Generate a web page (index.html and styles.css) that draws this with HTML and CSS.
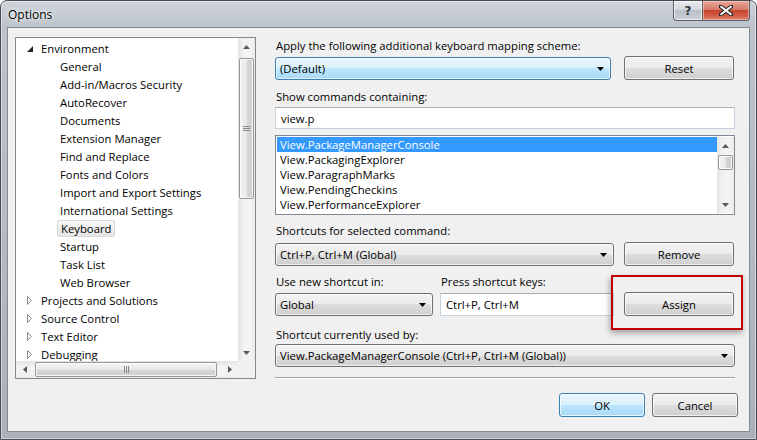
FILE: index.html
```html
<!DOCTYPE html>
<html>
<head>
<meta charset="utf-8">
<link rel="stylesheet" href="styles.css">
</head>
<body>
<div class="window">
  <div class="titlebar">
    <span class="title">Options</span>
    <div class="caption-btns">
      <div class="cbtn help">?</div>
      <div class="cbtn close">
        <svg width="14" height="11" viewBox="0 0 14 11"><path d="M1 1 L13 10 M13 1 L1 10" stroke="#2a2a2a" stroke-width="4" stroke-linecap="square"/><path d="M1.5 1.3 L12.5 9.7 M12.5 1.3 L1.5 9.7" stroke="#fff" stroke-width="2"/></svg>
      </div>
    </div>
  </div>
  <div class="client">
    <div class="main">
      <div class="tree">
        <div class="tree-items">
          <div class="trow top"><svg class="exp" width="6" height="6" viewBox="0 0 6 6"><polygon points="6,0 6,6 0,6" fill="#262626"/></svg><span>Environment</span></div>
          <div class="trow child"><span>General</span></div>
          <div class="trow child"><span>Add-in/Macros Security</span></div>
          <div class="trow child"><span>AutoRecover</span></div>
          <div class="trow child"><span>Documents</span></div>
          <div class="trow child"><span>Extension Manager</span></div>
          <div class="trow child"><span>Find and Replace</span></div>
          <div class="trow child"><span>Fonts and Colors</span></div>
          <div class="trow child"><span>Import and Export Settings</span></div>
          <div class="trow child"><span>International Settings</span></div>
          <div class="trow child"><span class="sel">Keyboard</span></div>
          <div class="trow child"><span>Startup</span></div>
          <div class="trow child"><span>Task List</span></div>
          <div class="trow child"><span>Web Browser</span></div>
          <div class="trow top"><svg class="col" width="6" height="9" viewBox="0 0 6 9"><polygon points="0.5,0.5 4.5,4.5 0.5,8.5" fill="none" stroke="#8a8a8a"/></svg><span>Projects and Solutions</span></div>
          <div class="trow top"><svg class="col" width="6" height="9" viewBox="0 0 6 9"><polygon points="0.5,0.5 4.5,4.5 0.5,8.5" fill="none" stroke="#8a8a8a"/></svg><span>Source Control</span></div>
          <div class="trow top"><svg class="col" width="6" height="9" viewBox="0 0 6 9"><polygon points="0.5,0.5 4.5,4.5 0.5,8.5" fill="none" stroke="#8a8a8a"/></svg><span>Text Editor</span></div>
          <div class="trow top"><svg class="col" width="6" height="9" viewBox="0 0 6 9"><polygon points="0.5,0.5 4.5,4.5 0.5,8.5" fill="none" stroke="#8a8a8a"/></svg><span>Debugging</span></div>
        </div>
        <div class="vscroll tree-v">
          <div class="sbtn"><svg width="7" height="4" viewBox="0 0 7 4"><polygon points="3.5,0 7,4 0,4" fill="#5a5a5a"/></svg></div>
          <div class="vtrack"><div class="vthumb tthumb"><svg width="7" height="7" viewBox="0 0 7 7"><path d="M0 1.5H7M0 3.5H7M0 5.5H7" stroke="#8a8a8a"/></svg></div></div>
          <div class="sbtn"><svg width="7" height="4" viewBox="0 0 7 4"><polygon points="0,0 7,0 3.5,4" fill="#5a5a5a"/></svg></div>
        </div>
        <div class="hscroll">
          <div class="sbtn"><svg width="4" height="7" viewBox="0 0 4 7"><polygon points="0,3.5 4,0 4,7" fill="#5a5a5a"/></svg></div>
          <div class="htrack"><div class="hthumb"><svg width="7" height="7" viewBox="0 0 7 7"><path d="M1.5 0V7M3.5 0V7M5.5 0V7" stroke="#8a8a8a"/></svg></div></div>
          <div class="sbtn"><svg width="4" height="7" viewBox="0 0 4 7"><polygon points="0,0 4,3.5 0,7" fill="#5a5a5a"/></svg></div>
        </div>
        <div class="corner"></div>
      </div>

      <div class="panel">
        <div class="lbl">Apply the following additional keyboard mapping scheme:</div>
        <div class="row r1">
          <div class="combo hot w336"><span>(Default)</span><svg width="7" height="4" viewBox="0 0 7 4"><polygon points="0,0 7,0 3.5,4" fill="#000"/></svg></div>
          <div class="btn">Reset</div>
        </div>
        <div class="lbl l2">Show commands containing:</div>
        <div class="textbox full t1">view.p</div>
        <div class="listbox">
          <div class="items">
            <div class="li selected">View.PackageManagerConsole</div>
            <div class="li">View.PackagingExplorer</div>
            <div class="li">View.ParagraphMarks</div>
            <div class="li">View.PendingCheckins</div>
            <div class="li">View.PerformanceExplorer</div>
          </div>
          <div class="vscroll list-v">
            <div class="sbtn"><svg width="7" height="4" viewBox="0 0 7 4"><polygon points="3.5,0 7,4 0,4" fill="#5a5a5a"/></svg></div>
            <div class="vtrack"><div class="vthumb lthumb"></div></div>
            <div class="sbtn"><svg width="7" height="4" viewBox="0 0 7 4"><polygon points="0,0 7,0 3.5,4" fill="#5a5a5a"/></svg></div>
          </div>
        </div>
        <div class="lbl l3">Shortcuts for selected command:</div>
        <div class="row r3">
          <div class="combo w339"><span>Ctrl+P, Ctrl+M (Global)</span><svg width="7" height="4" viewBox="0 0 7 4"><polygon points="0,0 7,0 3.5,4" fill="#000"/></svg></div>
          <div class="btn">Remove</div>
        </div>
        <div class="row lblrow">
          <div class="lbl w165">Use new shortcut in:</div>
          <div class="lbl">Press shortcut keys:</div>
        </div>
        <div class="row r4">
          <div class="combo w158"><span>Global</span><svg width="7" height="4" viewBox="0 0 7 4"><polygon points="0,0 7,0 3.5,4" fill="#000"/></svg></div>
          <div class="textbox w174">Ctrl+P, Ctrl+M</div>
          <div class="assign-wrap">
            <div class="btn">Assign</div>
            <div class="highlight"></div>
          </div>
        </div>
        <div class="lbl l5">Shortcut currently used by:</div>
        <div class="combo full c5"><span>View.PackageManagerConsole (Ctrl+P, Ctrl+M (Global))</span><svg width="7" height="4" viewBox="0 0 7 4"><polygon points="0,0 7,0 3.5,4" fill="#000"/></svg></div>
        <div class="sep"></div>
      </div>
    </div>
    <div class="footer">
      <div class="btn hot fbtn">OK</div>
      <div class="btn fbtn">Cancel</div>
    </div>
  </div>
</div>
</body>
</html>
```

FILE: styles.css
```css
* { box-sizing: border-box; }
html, body { margin: 0; padding: 0; }
body {
  width: 757px; height: 440px; overflow: hidden;
  font-family: "Open Sans", "Noto Sans", sans-serif;
  font-size: 11.3px; color: #000; background: #fff;
}
.window {
  width: 757px; height: 440px;
  border: 1px solid #4a4e54;
  border-radius: 7px 7px 0 0;
  background: linear-gradient(to bottom, #cfd4da 0, #bcc3cb 26px, #aab1b9 100%);
  box-shadow: inset 0 0 0 1px rgba(255,255,255,0.45);
  display: flex; flex-direction: column;
  padding: 0 6px 7px 6px;
}
.titlebar { height: 26px; display: flex; justify-content: space-between; align-items: flex-start; }
.title { margin: 6px 0 0 1px; font-size: 12px; line-height: 16px; color: #000; text-shadow: 0 0 6px #fff, 0 0 3px #fff; }
.caption-btns { display: flex; }
.cbtn {
  height: 20px; border: 1px solid #5b6068; border-top: none;
  display: flex; align-items: center; justify-content: center;
}
.help {
  width: 29px; border-right: none; border-radius: 0 0 0 4px;
  background: linear-gradient(to bottom, #e9ecef 0, #d3d8de 45%, #b8bfc7 50%, #c9d0d7 100%);
  font-family: "DejaVu Sans", sans-serif; font-size: 12px; font-weight: bold; color: #333;
  box-shadow: inset 0 0 0 1px rgba(255,255,255,0.6);
}
.close {
  width: 48px; border-radius: 0 0 4px 0;
  background: linear-gradient(to bottom, #e9a99d 0, #d77a68 45%, #c7452f 50%, #d35e48 80%, #e38b76 100%);
  box-shadow: inset 0 0 0 1px rgba(255,220,210,0.5);
}
.client {
  flex: 1; background: #f0f0f0;
  border: 1px solid #848a92;
  display: flex; flex-direction: column;
}
.main { display: flex; padding-top: 9px; height: 351px; }

/* tree */
.tree {
  margin-left: 7px; width: 241px; height: 342px;
  border: 1px solid #828790; background: #fff;
  display: grid; grid-template-columns: 222px 17px; grid-template-rows: 323px 17px;
}
.tree-items { overflow: hidden; padding-top: 1px; }
.trow { height: 18px; display: flex; align-items: center; white-space: nowrap; }
.trow span { line-height: 17px; }
.trow.top { padding-left: 11px; }
.trow.top svg { width: 6px; margin-right: 8px; }
.trow.top .exp { margin-top: 1px; }
.trow.child { padding-left: 44px; }
.sel {
  margin-left: -3px; padding: 0 3px;
  border: 1px solid #d9d9d9; border-radius: 2px;
  background: linear-gradient(to bottom, #f8f8f8, #e5e5e5);
  line-height: 15px !important;
}

/* scrollbars */
.vscroll { display: flex; flex-direction: column; background: linear-gradient(to right, #e3e3e3, #f1f1f1 30%, #f4f4f4 70%, #ececec); }
.sbtn { width: 17px; height: 17px; display: flex; align-items: center; justify-content: center; flex: none; }
.vtrack { flex: 1; display: flex; flex-direction: column; align-items: center; }
.vthumb {
  width: 15px; border: 1px solid #979797; border-radius: 2px;
  background: linear-gradient(to right, #f4f4f4, #e8e8e8 50%, #d6d6d6 51%, #cfcfcf);
  box-shadow: inset 0 0 0 1px rgba(255,255,255,0.8);
  display: flex; align-items: center; justify-content: center;
}
.tthumb { margin-top: 3px; height: 141px; }
.hscroll {
  display: flex;
  background: linear-gradient(to bottom, #e3e3e3, #f1f1f1 30%, #f4f4f4 70%, #ececec);
}
.htrack { flex: 1; display: flex; align-items: center; }
.hthumb {
  margin-left: 2px; width: 182px; height: 15px;
  border: 1px solid #979797; border-radius: 2px;
  background: linear-gradient(to bottom, #f4f4f4, #e8e8e8 50%, #d6d6d6 51%, #cfcfcf);
  box-shadow: inset 0 0 0 1px rgba(255,255,255,0.8);
  display: flex; align-items: center; justify-content: center;
}
.corner { background: #f0f0f0; }

/* right panel */
.panel { margin-left: 19px; margin-top: 1px; width: 460px; display: flex; flex-direction: column; }
.lbl { height: 16px; line-height: 16px; white-space: nowrap; padding-left: 1px; }
.row { display: flex; align-items: flex-end; }
.r1 { margin-top: 2px; justify-content: space-between; }
.l2 { margin-top: 9px; }
.t1 { margin-top: 2px; }
.l3 { margin-top: 8px; }
.r3 { margin-top: 3px; justify-content: space-between; }
.lblrow { margin-top: 8px; }
.r4 { margin-top: 2px; }
.l5 { margin-top: 11px; }
.c5 { margin-top: 1px; }
.w336 { width: 336px; }
.w339 { width: 339px; }
.w158 { width: 158px; }
.w165 { width: 165px; }
.w174 { width: 174px; margin-left: 7px; }
.full { width: 460px; }

.combo {
  height: 23px; border: 1px solid #707070; border-radius: 3px;
  background: linear-gradient(to bottom, #f2f2f2 0, #ebebeb 50%, #dddddd 50%, #cfcfcf 100%);
  box-shadow: inset 0 0 0 1px rgba(255,255,255,0.7);
  display: flex; align-items: center; justify-content: space-between;
  padding: 0 6px 0 4px; white-space: nowrap;
}
.combo.hot, .btn.hot {
  border-color: #3c7fb1;
  background: linear-gradient(to bottom, #eaf6fd 0, #d9f0fc 50%, #bee6fd 50%, #a7d9f5 100%);
}
.btn {
  width: 110px; height: 24px; margin-right: 1px;
  border: 1px solid #707070; border-radius: 3px;
  background: linear-gradient(to bottom, #f2f2f2 0, #ebebeb 50%, #dddddd 50%, #cfcfcf 100%);
  box-shadow: inset 0 0 0 1px rgba(255,255,255,0.7);
  display: flex; align-items: center; justify-content: center;
}
.textbox {
  height: 22px; background: #fff;
  border: 1px solid #c5d3e0; border-top-color: #abadb3;
  display: flex; align-items: center; padding-left: 5px; white-space: nowrap;
}
.r4 .textbox { height: 23px; }
.listbox {
  margin-top: 6px; width: 460px; height: 80px;
  border: 1px solid #828790; background: #fff;
  display: flex; padding: 1px 0 1px 1px;
}
.items { flex: 1; }
.li { height: 15px; line-height: 15px; padding-left: 3px; white-space: nowrap; }
.li.selected { background: #3399ff; color: #fff; }
.list-v { width: 17px; }
.lthumb { margin-top: 1px; height: 15px; }

.assign-wrap { position: relative; margin-left: 10px; }
.highlight {
  position: absolute; left: -13px; top: -17px; width: 132px; height: 55px;
  border: 2px solid #c00000;
  box-shadow: -1px 3px 6px rgba(0,0,0,0.35);
  pointer-events: none;
}
.sep { margin-top: 10px; height: 2px; border-top: 1px solid #a0a0a0; border-bottom: 1px solid #fff; }

.footer { display: flex; justify-content: flex-end; gap: 7px; margin-top: 14px; padding-right: 11px; }
.fbtn { width: 86px; height: 24px; margin-right: 0; }
```
